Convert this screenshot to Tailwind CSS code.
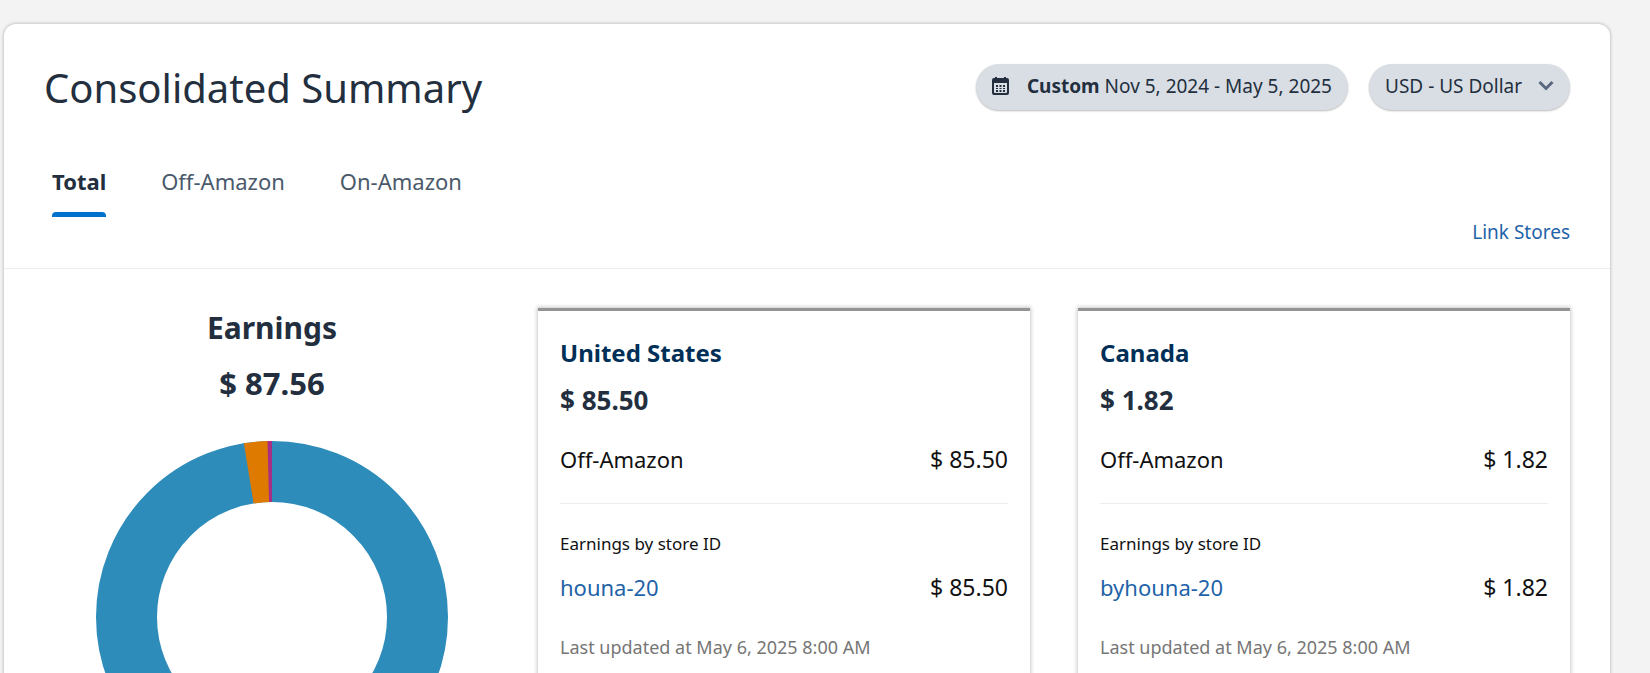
<!DOCTYPE html>
<html lang="en">
<head>
<meta charset="utf-8">
<meta name="viewport" content="width=device-width, initial-scale=1">
<title>Consolidated Summary</title>
<script src="https://cdn.jsdelivr.net/npm/@tailwindcss/browser@4"></script>
</head>
<body class="bg-[#f3f3f3] font-['Noto_Sans',sans-serif] text-[#232f3e]">
<main class="mt-6 mr-10 ml-1 rounded-t-xl bg-white shadow-[0_0_3px_1px_rgba(0,0,0,0.18)]">
  <header class="border-b border-[#eaeded] px-10 pt-10 pb-6">
    <div class="flex items-start justify-between">
      <h1 class="text-[40px] leading-[48px]">Consolidated Summary</h1>
      <div class="flex gap-[21px] text-[19px] leading-6">
        <button type="button" class="flex h-[46px] items-center rounded-full bg-[#d9dee4] px-4 pb-0.5 shadow-[0_1px_2px_rgba(0,0,0,0.28)]">
          <svg class="mr-[18px] h-[18px] w-[17px]" viewBox="0 0 17 18" aria-hidden="true">
            <path fill="#232f3e" fill-rule="evenodd" d="M3 0h2v1h7V0h2v1h1q2 0 2 2v13q0 2-2 2H2q-2 0-2-2V3q0-2 2-2h1zM2 6v9q0 1 1 1h11q1 0 1-1V6z"/>
            <path fill="#232f3e" d="M4 8h2v2H4zm3.500 0h2v2h-2zM11 8h2v2h-2zM4 11h2v1H4zm3.500 0h2v1h-2zm3.500 0h2v1h-2zM4 13h2v2H4zm3.500 0h2v2h-2zm3.500 0h2v2h-2z"/>
          </svg>
          <span class="whitespace-nowrap"><strong>Custom</strong> Nov 5, 2024 - May 5, 2025</span>
        </button>
        <div class="relative">
          <select aria-label="Currency" class="h-[46px] appearance-none rounded-full bg-[#d9dee4] pr-[47px] pb-0.5 pl-4 shadow-[0_1px_2px_rgba(0,0,0,0.28)]">
            <option>USD - US Dollar</option>
          </select>
          <svg class="pointer-events-none absolute top-4 right-4 h-3 w-4" viewBox="0 0 16 12" fill="none" stroke="#5a6780" stroke-width="3" aria-hidden="true"><path d="M1.500 2L8 8.500 14.500 2"/></svg>
        </div>
      </div>
    </div>
    <nav class="mt-[53px] flex gap-[55px] pl-2 text-[22px] leading-8 text-[#4b5a6b]" aria-label="Earnings source">
      <button type="button" class="font-bold text-[#232f3e]">Total<span class="mt-[15px] block h-[5px] rounded-t-sm bg-[#0073cf]"></span></button>
      <button type="button" class="self-start">Off-Amazon</button>
      <button type="button" class="self-start">On-Amazon</button>
    </nav>
    <div class="mt-[3px] text-right text-[19px] leading-6"><a href="#" class="text-[#1f63a8]">Link Stores</a></div>
  </header>

  <div class="grid grid-cols-[456fr_1032fr] gap-[38px] px-10 pt-[39px]">
    <section class="text-center">
      <h2 class="text-[30px] leading-10 font-bold">Earnings</h2>
      <p class="mt-[15px] text-[31px] leading-10 font-bold">$ 87.56</p>
      <svg class="mx-auto mt-[38px] w-[352px]" viewBox="0 0 352 352" role="img" aria-label="Earnings by country">
        <g fill="none" stroke-width="61" transform="rotate(-90 176 176)">
          <circle cx="176" cy="176" r="145.500" stroke="#2e8cba"/>
          <circle cx="176" cy="176" r="145.500" pathLength="8756" stroke="#de7a00" stroke-dasharray="200 8556" stroke-dashoffset="-8532"/>
          <circle cx="176" cy="176" r="145.500" pathLength="8756" stroke="#a62e84" stroke-dasharray="36 8720" stroke-dashoffset="-8720"/>
        </g>
      </svg>
    </section>

    <div class="grid grid-cols-2 gap-12">
      <section class="border-t-3 border-[#949494] px-[22px] pt-6 shadow-[0_0_4px_1px_rgba(0,0,0,0.22)]">
        <h3 class="text-[24px] leading-9 font-bold text-[#002f57]">United States</h3>
        <p class="mt-[11px] text-[26px] leading-9 font-bold">$ 85.50</p>
        <div class="mt-[25px] flex justify-between border-b border-[#eaeded] pb-7 text-[#111]"><span class="text-[22px] leading-8">Off-Amazon</span><span class="text-[23px] leading-8">$ 85.50</span></div>
        <p class="mt-7 text-[17px] leading-6 text-[#111]">Earnings by store ID</p>
        <div class="mt-[15px] flex justify-between text-[#111]"><a href="#" class="text-[22px] leading-8 text-[#1f63a8]">houna-20</a><span class="text-[23px] leading-8">$ 85.50</span></div>
        <p class="mt-8 text-[18px] leading-6 text-[#767676]">Last updated at May 6, 2025 8:00 AM</p>
      </section>
      <section class="border-t-3 border-[#949494] px-[22px] pt-6 shadow-[0_0_4px_1px_rgba(0,0,0,0.22)]">
        <h3 class="text-[24px] leading-9 font-bold text-[#002f57]">Canada</h3>
        <p class="mt-[11px] text-[26px] leading-9 font-bold">$ 1.82</p>
        <div class="mt-[25px] flex justify-between border-b border-[#eaeded] pb-7 text-[#111]"><span class="text-[22px] leading-8">Off-Amazon</span><span class="text-[23px] leading-8">$ 1.82</span></div>
        <p class="mt-7 text-[17px] leading-6 text-[#111]">Earnings by store ID</p>
        <div class="mt-[15px] flex justify-between text-[#111]"><a href="#" class="text-[22px] leading-8 text-[#1f63a8]">byhouna-20</a><span class="text-[23px] leading-8">$ 1.82</span></div>
        <p class="mt-8 text-[18px] leading-6 text-[#767676]">Last updated at May 6, 2025 8:00 AM</p>
      </section>
    </div>
  </div>
</main>
</body>
</html>
